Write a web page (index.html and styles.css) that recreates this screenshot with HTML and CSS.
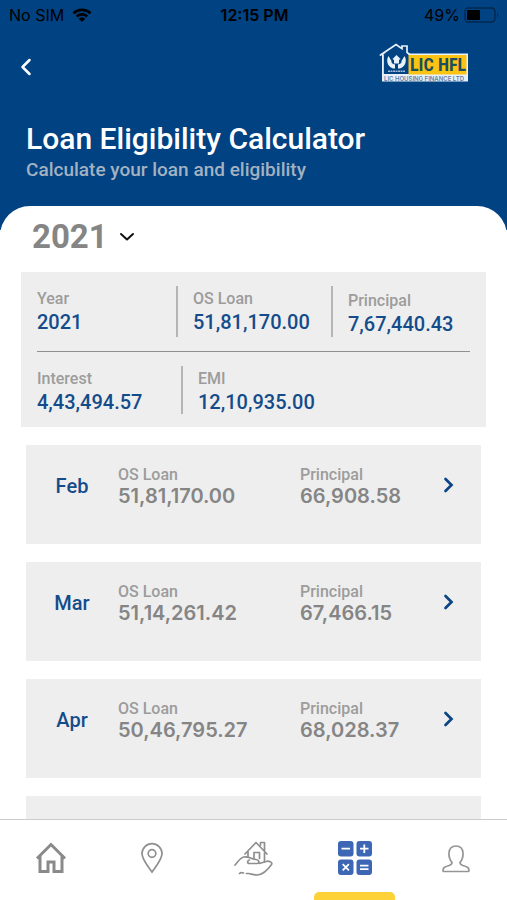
FILE: index.html
```html
<!DOCTYPE html>
<html lang="en">
<head>
<meta charset="utf-8">
<meta name="viewport" content="width=device-width, initial-scale=1">
<title>Loan Eligibility Calculator</title>
<link rel="stylesheet" href="styles.css">
</head>
<body>
<div class="app">
  <header class="header">
    <div class="status">
      <div class="status-left">
        <span>No SIM</span>
        <svg class="wifi" viewBox="0 0 20 14" aria-hidden="true">
          <path d="M1.5 5.2a12.4 12.4 0 0 1 17 0M4.7 8.5a7.7 7.7 0 0 1 10.6 0" fill="none" stroke="#000" stroke-width="2.6"/>
          <path d="M6.7 10.7a4.8 4.8 0 0 1 6.6 0L10 14z"/>
        </svg>
      </div>
      <span class="clock">12:15 PM</span>
      <div class="status-right">
        <span>49%</span>
        <svg class="battery" viewBox="0 0 36 16" aria-hidden="true">
          <rect x="1" y="1" width="30" height="14" rx="3.500" fill="none" stroke="#03284f" stroke-width="1.500"/>
          <rect x="3" y="3" width="13" height="10" rx="1"/>
          <path d="M33 5.500q2.500 2.500 0 5z" fill="#03284f"/>
        </svg>
      </div>
    </div>
    <div class="topbar">
      <button class="back" type="button" aria-label="Back">
        <svg viewBox="0 0 12 18" aria-hidden="true"><path d="M9.500 2 2.500 9l7 7" fill="none" stroke="#fff" stroke-width="2.500" stroke-linecap="round" stroke-linejoin="round"/></svg>
      </button>
      <svg class="logo" viewBox="0 0 90 40" role="img" aria-label="LIC HFL, LIC Housing Finance Ltd">
        <rect x="3" y="10.500" width="86" height="28" fill="#e8f1fa"/>
        <path d="M4 31V12L17 2l13 10v19z" fill="#004282"/>
        <path d="M4 32V12M.8 12.500 17 1.500l6 4.200V3h5v6.300l4 3.200" fill="none" stroke="#e8f1fa" stroke-width="1.700"/>
        <rect x="29.500" y="12" width="58" height="19.500" fill="#fbc312"/>
        <path d="M9.500 13c-2.500 4-1.500 10.500 4.500 12.500h2v-4c-2.500-.5-4-1.500-3.500-3.500zM25.500 13c2.500 4 1.500 10.500-4.500 12.500h-2v-4c2.500-.5 4-1.500 3.500-3.500z" fill="#e8f1fa"/>
        <path d="M17.500 12l4 4-1.500 1v3.500h-5V17l-1.500-1z" fill="#e8f1fa"/>
        <path d="M9 28.300h17" stroke="#9fbbd8" stroke-width="1.500" stroke-dasharray="2 .5"/>
        <text class="logo-name" x="31" y="28">LIC HFL</text>
        <text class="logo-sub" x="5" y="37.500">LIC HOUSING FINANCE LTD</text>
      </svg>
    </div>
    <h1 class="title">Loan Eligibility Calculator</h1>
    <p class="subtitle">Calculate your loan and eligibility</p>
  </header>

  <main class="sheet">
    <div class="year">
      <select class="year-select" aria-label="Year">
        <option>2021</option>
      </select>
      <svg class="year-arrow" viewBox="0 0 16 10" aria-hidden="true"><path d="M2 2l6 5.500L14 2" fill="none" stroke="#111" stroke-width="2" stroke-linecap="round" stroke-linejoin="round"/></svg>
    </div>

    <section class="summary">
      <dl class="summary-row">
        <div class="cell"><dt>Year</dt><dd>2021</dd></div>
        <div class="cell"><dt>OS Loan</dt><dd>51,81,170.00</dd></div>
        <div class="cell cell-low"><dt>Principal</dt><dd>7,67,440.43</dd></div>
      </dl>
      <dl class="summary-row summary-row-two">
        <div class="cell"><dt>Interest</dt><dd>4,43,494.57</dd></div>
        <div class="cell"><dt>EMI</dt><dd>12,10,935.00</dd></div>
      </dl>
    </section>

    <ul class="months">
      <li><a class="month" href="#feb">
        <span class="month-name">Feb</span>
        <span class="amount"><span class="label">OS Loan</span><span class="value">51,81,170.00</span></span>
        <span class="amount"><span class="label">Principal</span><span class="value">66,908.58</span></span>
        <svg class="chevron" viewBox="0 0 12 18" aria-hidden="true"><path d="M2.500 3l6 6-6 6" fill="none" stroke="#0d4584" stroke-width="2.700" stroke-linecap="round"/></svg>
      </a></li>
      <li><a class="month" href="#mar">
        <span class="month-name">Mar</span>
        <span class="amount"><span class="label">OS Loan</span><span class="value">51,14,261.42</span></span>
        <span class="amount"><span class="label">Principal</span><span class="value">67,466.15</span></span>
        <svg class="chevron" viewBox="0 0 12 18" aria-hidden="true"><path d="M2.500 3l6 6-6 6" fill="none" stroke="#0d4584" stroke-width="2.700" stroke-linecap="round"/></svg>
      </a></li>
      <li><a class="month" href="#apr">
        <span class="month-name">Apr</span>
        <span class="amount"><span class="label">OS Loan</span><span class="value">50,46,795.27</span></span>
        <span class="amount"><span class="label">Principal</span><span class="value">68,028.37</span></span>
        <svg class="chevron" viewBox="0 0 12 18" aria-hidden="true"><path d="M2.500 3l6 6-6 6" fill="none" stroke="#0d4584" stroke-width="2.700" stroke-linecap="round"/></svg>
      </a></li>
      <li><a class="month" href="#next" aria-label="Next month">
        <span class="month-name"></span>
        <span class="amount"></span>
        <span class="amount"><span class="label">Principal</span></span>
      </a></li>
    </ul>
  </main>

  <nav class="tabs" aria-label="Main">
    <a class="tab" href="#home" aria-label="Home">
      <svg viewBox="0 0 40 40" aria-hidden="true"><path d="M6 20.500 20 6.500l14 14M9 18v15.500h8V24h6v9.500h8V18" fill="none" stroke="#8a8a8a" stroke-width="3"/></svg>
    </a>
    <a class="tab" href="#branches" aria-label="Branches">
      <svg viewBox="0 0 40 40" aria-hidden="true"><g fill="none" stroke="#8f8f8f" stroke-width="1.700"><path d="M20 34C15.500 27.500 10 21.500 10 15.500a10 9.800 0 0 1 20 0C30 21.500 24.500 27.500 20 34z"/><circle cx="20" cy="15.500" r="3.800"/></g></svg>
    </a>
    <a class="tab" href="#loans" aria-label="Loans">
      <svg viewBox="-2 1 40 40" aria-hidden="true"><g fill="none" stroke="#8f8f8f" stroke-width="1.700" stroke-linecap="round" stroke-linejoin="round"><path d="M10 17 21 5.500l11 11.500M25.500 8V5.500h4V14M13 15v4.500M29.500 16v9M19 21v-5.500h5.500v6"/><path d="M0 28c3-3.500 5.500-7.500 9-8 5-.5 7.500 2 12 2.500 3.500.5 4 4 1 4h-7.500c-2.500 0-2.500-3 0-3.500M24.500 26.500l6.500-2c2.500-1 7 .5 5.500 3C33 32.500 27.500 37.500 22.500 38c-4 0-6-1-9-1.500h-2M8.500 36c-1.500-.5-3-.5-4 .5"/></g></svg>
    </a>
    <a class="tab tab-active" href="#calculator" aria-label="Calculator" aria-current="page">
      <svg viewBox="0 0 40 40" aria-hidden="true"><g fill="#3d66b4"><rect x="3" y="3" width="15.500" height="15.500" rx="3"/><rect x="21.500" y="3" width="15.500" height="15.500" rx="3"/><rect x="3" y="21.500" width="15.500" height="15.500" rx="3"/><rect x="21.500" y="21.500" width="15.500" height="15.500" rx="3"/></g><path d="M6.500 10.700h8.500M25 10.700h8.500M29.300 6.500v8.500M7.700 26.200l6.200 6.200M13.900 26.200l-6.200 6.200M25 27.700h8.500M25 31.200h8.500" stroke="#fff" stroke-width="1.800"/></svg>
    </a>
    <a class="tab" href="#profile" aria-label="Profile">
      <svg viewBox="0 0 40 40" aria-hidden="true"><path d="M16 24.500c-2.500-3-3.200-6.500-3-9.500.3-4.500 3-7 7-7s6.700 2.500 7 7c.2 3-.5 6.500-3 9.500 0 2 1 2.500 3.500 3.200 4 1.200 5.500 2 5.500 4.800 0 .7-.4 1-1 1H8c-.6 0-1-.3-1-1 0-2.800 1.500-3.600 5.500-4.800 2.500-.7 3.500-1.200 3.500-3.200z" fill="none" stroke="#959595" stroke-width="1.700" stroke-linejoin="round"/></svg>
    </a>
  </nav>
</div>
</body>
</html>
```
FILE: styles.css
```css
* {
  box-sizing: border-box;
}

body {
  margin: 0;
  background: #fff;
  font-family: Roboto, "Liberation Sans", sans-serif;
  font-weight: 500;
}

h1, p, ul, dl, dd {
  margin: 0;
  padding: 0;
}

ul {
  list-style: none;
}

svg {
  display: block;
  flex: none;
}

.app {
  display: flex;
  flex-direction: column;
  height: 100vh;
  overflow: hidden;
}

/* Header */
.header {
  flex: none;
  padding-bottom: 47px;
  background: #004282;
  color: #fff;
}

.status {
  display: grid;
  grid-template-columns: 1fr auto 1fr;
  align-items: center;
  height: 30px;
  padding: 0 7px 0 9px;
  color: #000;
  font: 400 16px/20px Inter, sans-serif;
}

.status-left,
.status-right {
  display: flex;
  align-items: center;
  gap: 8px;
}

.status-right {
  justify-content: flex-end;
  gap: 4px;
}

.clock {
  font-weight: 600;
}

.wifi {
  width: 20px;
  height: 14px;
}

.battery {
  width: 36px;
  height: 16px;
}

.topbar {
  display: flex;
  align-items: flex-start;
  justify-content: space-between;
  padding: 13px 38px 0 20px;
}

.back {
  margin-top: 15px;
  padding: 0;
  border: 0;
  background: none;
}

.back svg {
  width: 12px;
  height: 18px;
}

.logo {
  width: 90px;
  height: 40px;
}

.logo-name {
  font: 700 18px "Roboto Condensed", "Liberation Sans Narrow", Roboto, sans-serif;
  fill: #1c4f5e;
}

.logo-sub {
  font: 600 6px Inter, Roboto, sans-serif;
  fill: #5e7fa5;
}

.title {
  margin-top: 38px;
  padding-left: 26px;
  font-size: 30px;
  font-weight: 500;
  line-height: 36px;
}

.subtitle {
  padding-left: 26px;
  color: #a3b1c1;
  font-size: 19px;
  line-height: 26px;
}

/* Sheet */
.sheet {
  flex: 1;
  min-height: 0;
  margin-top: -24px;
  overflow: hidden;
  border-radius: 30px 30px 0 0;
  background: #fff;
}

.year {
  display: flex;
  align-items: center;
  gap: 11px;
  height: 66px;
  padding: 0 32px 5px;
}

.year-select {
  appearance: none;
  padding: 0;
  border: 0;
  background: none;
  color: #858585;
  font: 700 33px/40px Roboto, sans-serif;
}

.year-arrow {
  width: 16px;
  height: 10px;
}

.summary {
  margin: 0 21px;
  padding: 14px 16px 13px;
  background: #eee;
}

.summary-row {
  display: grid;
  grid-template-columns: 139px 155px 1fr;
}

.summary-row-two {
  grid-template-columns: 144px 1fr;
  margin-top: 14px;
  padding-top: 14px;
  border-top: 1px solid #909090;
}

.cell {
  height: 51px;
}

.summary-row-two .cell {
  height: 48px;
}

.cell + .cell {
  padding-left: 15px;
  border-left: 2px solid #b5b5b5;
}

dt {
  padding-top: 1px;
}

.cell-low dt {
  padding-top: 3px;
}

dt,
.label {
  color: #9c9c9c;
  font-size: 16px;
  line-height: 24px;
}

dd {
  color: #144c8b;
  font-size: 20px;
  line-height: 23px;
}

/* Month list */
.months {
  display: grid;
  gap: 18px;
  padding: 18px 26px;
}

.month {
  display: grid;
  grid-template-columns: 92px 182px 1fr 38px;
  height: 99px;
  padding-top: 19px;
  background: #eee;
  color: inherit;
  text-decoration: none;
}

.month-name {
  padding-top: 8px;
  color: #144c8b;
  font-size: 20px;
  line-height: 28px;
  text-align: center;
}

.amount {
  display: flex;
  flex-direction: column;
}

.label {
  line-height: 21px;
}

.value {
  color: #858585;
  font: 600 20px/22px Inter, sans-serif;
}

.chevron {
  width: 12px;
  height: 18px;
  margin-top: 12px;
}

/* Tab bar */
.tabs {
  display: grid;
  flex: none;
  grid-template-columns: repeat(5, 1fr);
  height: 81px;
  border-top: 1px solid #ccc;
  background: #fff;
}

.tab {
  position: relative;
  display: flex;
  justify-content: center;
  padding-top: 18px;
}

.tab svg {
  width: 40px;
  height: 40px;
}

.tab-active::after {
  position: absolute;
  right: 10%;
  bottom: 0;
  left: 10%;
  height: 8px;
  border-radius: 5px 5px 0 0;
  background: #fdd238;
  content: "";
}
```
